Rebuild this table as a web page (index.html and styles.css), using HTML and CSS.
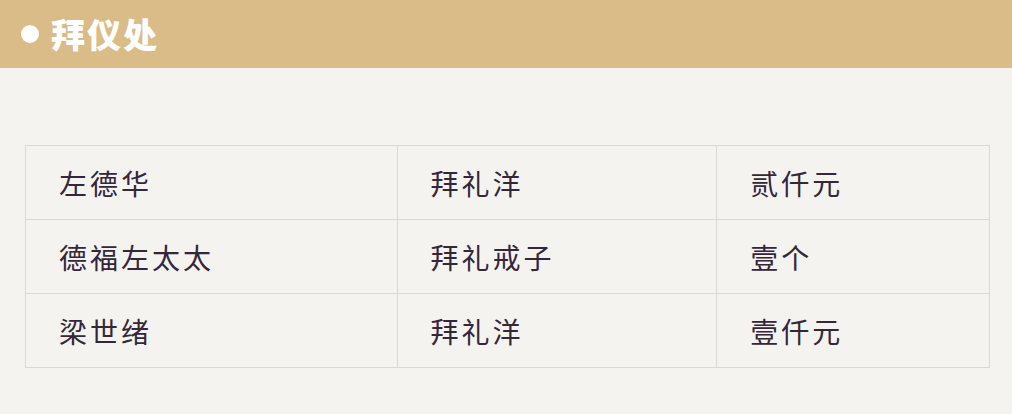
FILE: index.html
```html
<!DOCTYPE html>
<html lang="zh">
<head>
<meta charset="utf-8">
<link rel="stylesheet" href="styles.css">
</head>
<body>
<div class="page">
  <div class="header">
    <span class="dot"></span>
    <h1 class="title">拜仪处</h1>
  </div>
  <div class="content">
    <table class="gifts">
      <tr><td class="c1">左德华</td><td class="c2">拜礼洋</td><td class="c3">贰仟元</td></tr>
      <tr><td class="c1">德福左太太</td><td class="c2">拜礼戒子</td><td class="c3">壹个</td></tr>
      <tr><td class="c1">梁世绪</td><td class="c2">拜礼洋</td><td class="c3">壹仟元</td></tr>
    </table>
  </div>
</div>
</body>
</html>
```

FILE: styles.css
```css
html, body {
  margin: 0;
  padding: 0;
  background: #f4f3f0;
}
.page {
  width: 1012px;
  height: 414px;
  overflow: hidden;
  font-family: "Noto Sans CJK SC", "Noto Sans", sans-serif;
}
.header {
  height: 68px;
  background: #d9bc88;
  display: flex;
  align-items: center;
  padding-left: 21px;
  box-sizing: border-box;
}
.dot {
  width: 18px;
  height: 18px;
  border-radius: 50%;
  background: #fff;
  margin-right: 12px;
}
.title {
  margin: 0;
  color: #fff;
  font-size: 34px;
  font-weight: 900;
  line-height: 1;
  letter-spacing: 2px;
}
.content {
  padding: 77px 23px 0 25px;
}
.gifts {
  border-collapse: collapse;
  width: 965px;
}
.gifts td {
  border: 1px solid #d9d8d5;
  height: 74px;
  padding: 0 0 0 33px;
  font-size: 28px;
  font-weight: 400;
  color: #35263a;
  letter-spacing: 3px;
  vertical-align: middle;
  box-sizing: border-box;
}
.c1 { width: 372px; }
.c2 { width: 320px; }
.c3 { width: 273px; }
```
